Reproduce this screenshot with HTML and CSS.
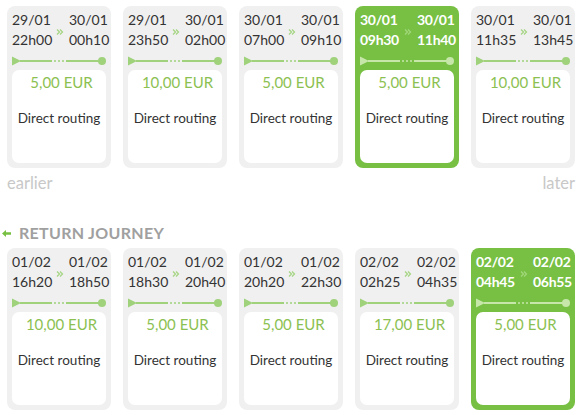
FILE: index.html
```html
<!DOCTYPE html>
<html>
<head>
<meta charset="utf-8">
<link rel="stylesheet" href="styles.css">
</head>
<body>
<svg width="0" height="0" class="defs">
  <defs>
    <symbol id="tl" viewBox="0 0 94 12">
      <path d="M0 1.5 L9 6 L0 10.5 Z" fill="currentColor"/>
      <rect x="8" y="5" width="32" height="2" fill="currentColor"/>
      <circle cx="43" cy="6" r="1" fill="currentColor"/>
      <circle cx="47" cy="6" r="1" fill="currentColor"/>
      <circle cx="51" cy="6" r="1" fill="currentColor"/>
      <rect x="54" y="5" width="36" height="2" fill="currentColor"/>
      <circle cx="90" cy="6" r="4" fill="currentColor"/>
    </symbol>
    <symbol id="chev" viewBox="0 0 8 8">
      <path d="M1 1.5 L3.5 4 L1 6.5 M4 1.5 L6.5 4 L4 6.5" fill="none" stroke="currentColor" stroke-width="1.3"/>
    </symbol>
  </defs>
</svg>

<div class="row">
  <div class="card">
    <div class="times"><div class="col"><span>29/01</span><span>22h00</span></div><svg class="chev"><use href="#chev"/></svg><div class="col"><span>30/01</span><span>00h10</span></div></div>
    <svg class="tl"><use href="#tl"/></svg>
    <div class="box"><div class="price">5,00 EUR</div><div class="route">Direct routing</div></div>
  </div>
  <div class="card">
    <div class="times"><div class="col"><span>29/01</span><span>23h50</span></div><svg class="chev"><use href="#chev"/></svg><div class="col"><span>30/01</span><span>02h00</span></div></div>
    <svg class="tl"><use href="#tl"/></svg>
    <div class="box"><div class="price">10,00 EUR</div><div class="route">Direct routing</div></div>
  </div>
  <div class="card">
    <div class="times"><div class="col"><span>30/01</span><span>07h00</span></div><svg class="chev"><use href="#chev"/></svg><div class="col"><span>30/01</span><span>09h10</span></div></div>
    <svg class="tl"><use href="#tl"/></svg>
    <div class="box"><div class="price">5,00 EUR</div><div class="route">Direct routing</div></div>
  </div>
  <div class="card selected">
    <div class="times"><div class="col"><span>30/01</span><span>09h30</span></div><svg class="chev"><use href="#chev"/></svg><div class="col"><span>30/01</span><span>11h40</span></div></div>
    <svg class="tl"><use href="#tl"/></svg>
    <div class="box"><div class="price">5,00 EUR</div><div class="route">Direct routing</div></div>
  </div>
  <div class="card">
    <div class="times"><div class="col"><span>30/01</span><span>11h35</span></div><svg class="chev"><use href="#chev"/></svg><div class="col"><span>30/01</span><span>13h45</span></div></div>
    <svg class="tl"><use href="#tl"/></svg>
    <div class="box"><div class="price">10,00 EUR</div><div class="route">Direct routing</div></div>
  </div>
</div>

<div class="nav"><span>earlier</span><span>later</span></div>

<div class="heading">
  <svg class="back" viewBox="0 0 9 7"><path d="M0 3.5 L4 0 L4 2.3 L9 2.3 L9 4.7 L4 4.7 L4 7 Z" fill="currentColor"/></svg>
  <span>RETURN JOURNEY</span>
</div>

<div class="row">
  <div class="card">
    <div class="times"><div class="col"><span>01/02</span><span>16h20</span></div><svg class="chev"><use href="#chev"/></svg><div class="col"><span>01/02</span><span>18h50</span></div></div>
    <svg class="tl"><use href="#tl"/></svg>
    <div class="box"><div class="price">10,00 EUR</div><div class="route">Direct routing</div></div>
  </div>
  <div class="card">
    <div class="times"><div class="col"><span>01/02</span><span>18h30</span></div><svg class="chev"><use href="#chev"/></svg><div class="col"><span>01/02</span><span>20h40</span></div></div>
    <svg class="tl"><use href="#tl"/></svg>
    <div class="box"><div class="price">5,00 EUR</div><div class="route">Direct routing</div></div>
  </div>
  <div class="card">
    <div class="times"><div class="col"><span>01/02</span><span>20h20</span></div><svg class="chev"><use href="#chev"/></svg><div class="col"><span>01/02</span><span>22h30</span></div></div>
    <svg class="tl"><use href="#tl"/></svg>
    <div class="box"><div class="price">5,00 EUR</div><div class="route">Direct routing</div></div>
  </div>
  <div class="card">
    <div class="times"><div class="col"><span>02/02</span><span>02h25</span></div><svg class="chev"><use href="#chev"/></svg><div class="col"><span>02/02</span><span>04h35</span></div></div>
    <svg class="tl"><use href="#tl"/></svg>
    <div class="box"><div class="price">17,00 EUR</div><div class="route">Direct routing</div></div>
  </div>
  <div class="card selected">
    <div class="times"><div class="col"><span>02/02</span><span>04h45</span></div><svg class="chev"><use href="#chev"/></svg><div class="col"><span>02/02</span><span>06h55</span></div></div>
    <svg class="tl"><use href="#tl"/></svg>
    <div class="box"><div class="price">5,00 EUR</div><div class="route">Direct routing</div></div>
  </div>
</div>
</body>
</html>
```

FILE: styles.css
```css
* { box-sizing: border-box; }
html, body { margin: 0; padding: 0; background: #fff; }
body {
  font-family: Lato, "Liberation Sans", Arial, sans-serif;
  font-size: 14px;
  color: #333;
  padding-top: 6px;
}
.defs { position: absolute; width: 0; height: 0; }
.row {
  display: flex;
  gap: 12px;
  padding-left: 7px;
}
.card {
  width: 104px;
  height: 162px;
  background: #f0f0f0;
  border-radius: 8px;
  padding: 4px 5px 5px;
  display: flex;
  flex-direction: column;
}
.times {
  display: grid;
  grid-template-columns: 44px 13px auto;
  align-items: center;
  height: 40px;
}
.col {
  display: flex;
  flex-direction: column;
  line-height: 20px;
  font-size: 14px;
}
.chev {
  width: 8px;
  height: 8px;
  margin: 3px 0 0 0;
  color: #a6d585;
}
.tl {
  display: block;
  width: 94px;
  height: 12px;
  margin: 5px 0 3px;
  color: #9fd27b;
}
.box {
  flex: 1;
  background: #fff;
  border-radius: 7px;
  text-align: center;
  padding-top: 2px;
}
.price {
  line-height: 20px;
  font-size: 15px;
  padding-left: 5px;
  color: #8cc152;
}
.route {
  line-height: 20px;
  font-size: 13.5px;
  margin-top: 16px;
}
.selected {
  background: #77c043;
  color: #fff;
  font-weight: 700;
}
.selected .col { letter-spacing: -0.3px; }
.selected .chev { color: #a2d77b; }
.selected .tl { color: #c6e6aa; }
.selected .box { color: #333; font-weight: 400; }
.nav {
  display: flex;
  justify-content: space-between;
  padding: 0 6px 0 7px;
  margin-top: 5px;
  line-height: 20px;
  font-size: 16.5px;
  color: #c8c8c8;
}
.heading {
  display: flex;
  align-items: center;
  margin-top: 30px;
  margin-bottom: 5px;
  line-height: 20px;
  padding-left: 2px;
  font-size: 16px;
  letter-spacing: 0.3px;
  font-weight: 700;
  color: #a0a0a0;
}
.back {
  width: 9px;
  height: 7px;
  color: #77c043;
  margin-right: 8px;
}
```
